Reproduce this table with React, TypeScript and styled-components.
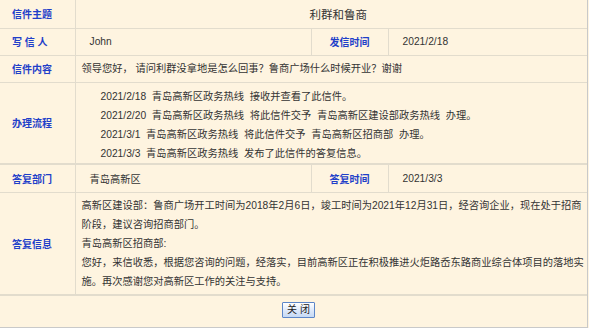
import styled, { createGlobalStyle } from 'styled-components';

const GlobalStyle = createGlobalStyle`
    html, body {
        margin: 0;
        padding: 0;
        background: #fef4e0;
    }
    body {
        font-family: "Liberation Sans", "Noto Sans CJK SC", sans-serif;
        color: #333333;
    }
`;

const flow = [
    "2021/2/18  青岛高新区政务热线  接收并查看了此信件。",
    "2021/2/20  青岛高新区政务热线  将此信件交予  青岛高新区建设部政务热线  办理。",
    "2021/3/1  青岛高新区政务热线  将此信件交予  青岛高新区招商部  办理。",
    "2021/3/3  青岛高新区政务热线  发布了此信件的答复信息。",
];

const reply = [
    "高新区建设部：鲁商广场开工时间为2018年2月6日，竣工时间为2021年12月31日，经咨询企业，现在处于招商阶段，建议咨询招商部门。",
    "青岛高新区招商部:",
    "您好，来信收悉，根据您咨询的问题，经落实，目前高新区正在积极推进火炬路岙东路商业综合体项目的落地实施。再次感谢您对高新区工作的关注与支持。",
];

function App() {
    return (
        <Page>
            <GlobalStyle />
            <Table>
                <colgroup>
                    <col style={{ width: 75 }} />
                    <col style={{ width: 236 }} />
                    <col style={{ width: 77 }} />
                    <col />
                </colgroup>
                <tbody>
                    <Row $h={28}>
                        <Label>信件主题</Label>
                        <Title colSpan={3}>利群和鲁商</Title>
                    </Row>
                    <Row $h={27}>
                        <Label>写 信 人</Label>
                        <Value>John</Value>
                        <SideLabel>发信时间</SideLabel>
                        <Value>2021/2/18</Value>
                    </Row>
                    <Row $h={27}>
                        <Label>信件内容</Label>
                        <Text colSpan={3}>领导您好， 请问利群没拿地是怎么回事？鲁商广场什么时候开业？谢谢</Text>
                    </Row>
                    <Row $h={82} $thick>
                        <Label>办理流程</Label>
                        <Flow colSpan={3}>
                            {flow.map((line, i) => <Line key={i}>{line}</Line>)}
                        </Flow>
                    </Row>
                    <Row $h={28}>
                        <Label>答复部门</Label>
                        <Value>青岛高新区</Value>
                        <SideLabel>答复时间</SideLabel>
                        <Value>2021/3/3</Value>
                    </Row>
                    <Row $h={101} $thick>
                        <Label>答复信息</Label>
                        <Text colSpan={3}>
                            {reply.map((p, i) => <Para key={i}>{p}</Para>)}
                        </Text>
                    </Row>
                </tbody>
            </Table>
            <Footer>
                <CloseButton type="button">关 闭</CloseButton>
            </Footer>
        </Page>
    );
}

const Page = styled.div`
    width: 587px;
    height: 327px;
    border-right: 1px solid #c9c9c9;
    border-bottom: 1px solid #c9c9c9;
    background: #fef4e0;
    display: flex;
    flex-direction: column;
`;

const Table = styled.table`
    width: 100%;
    table-layout: fixed;
    border-collapse: collapse;
    font-size: 10.25px;
`;

const Row = styled.tr<{ $h: number; $thick?: boolean }>`
    height: ${p => p.$h}px;
    border-bottom: ${p => p.$thick ? 2 : 1}px solid #e2dccd;
`;

const Cell = styled.td`
    border-left: 1px solid #e2dccd;
    padding: 0;
    vertical-align: middle;
    &:first-child {
        border-left: 0;
    }
`;

const Label = styled(Cell)`
    padding-left: 12px;
    font-size: 10px;
    font-weight: bold;
    color: #1f3fc9;
    white-space: pre;
`;

const SideLabel = styled(Label)`
    padding-left: 0;
    text-align: center;
`;

const Value = styled(Cell)`
    padding-left: 14px;
`;

const Title = styled(Cell)`
    padding-left: 14px;
    text-align: center;
    font-size: 11.5px;
`;

const Text = styled(Cell)`
    padding: 3px 3px 3px 6px;
    line-height: 19px;
`;

const Flow = styled(Cell)`
    padding: 4px 0 0 25px;
    line-height: 19px;
`;

const Line = styled.div`
    white-space: pre;
`;

const Para = styled.div``;

const Footer = styled.div`
    flex: 1;
    display: flex;
    align-items: center;
    justify-content: center;
    padding-left: 10px;
`;

const CloseButton = styled.button`
    width: 33px;
    height: 16px;
    padding: 0;
    margin-top: -2px;
    font-family: "Liberation Sans", "Noto Sans CJK SC", sans-serif;
    font-size: 10px;
    line-height: 14px;
    color: #222;
    border: 1px solid #5c86c8;
    border-radius: 1px;
    background: linear-gradient(#ffffff, #dce8fa 55%, #c6d9f4);
    white-space: pre;
`;

export default App;
